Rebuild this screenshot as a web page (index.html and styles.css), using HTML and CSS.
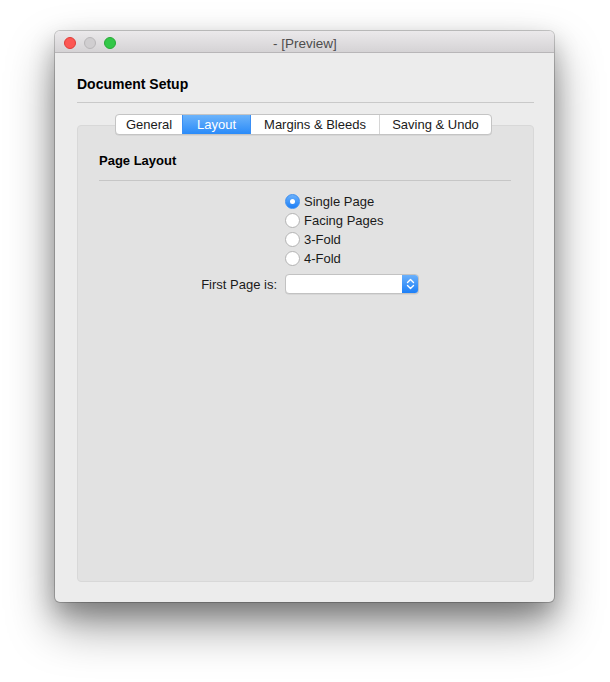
FILE: index.html
```html
<!DOCTYPE html>
<html>
<head>
<meta charset="utf-8">
<link rel="stylesheet" href="styles.css">
</head>
<body>
<div class="window">
  <div class="titlebar">
    <div class="lights">
      <span class="light red"></span>
      <span class="light gray"></span>
      <span class="light green"></span>
    </div>
    <div class="title">- [Preview]</div>
  </div>
  <div class="content">
    <div class="heading">Document Setup</div>
    <div class="sep"></div>
    <div class="tabview">
      <div class="tabs">
        <div class="tab t1">General</div>
        <div class="tab t2 active">Layout</div>
        <div class="tab t3">Margins &amp; Bleeds</div>
        <div class="tab t4">Saving &amp; Undo</div>
      </div>
      <div class="panel">
        <div class="subheading">Page Layout</div>
        <div class="sep2"></div>
        <div class="form">
          <div class="cell"></div>
          <div class="radios">
            <label class="radio"><span class="circle on"></span>Single Page</label>
            <label class="radio"><span class="circle"></span>Facing Pages</label>
            <label class="radio"><span class="circle"></span>3-Fold</label>
            <label class="radio"><span class="circle"></span>4-Fold</label>
          </div>
          <div class="label">First Page is:</div>
          <div class="popup">
            <div class="popup-field"></div>
            <div class="popup-btn">
              <svg width="9" height="12" viewBox="0 0 9 12"><path d="M1.5 4.5 L4.5 1.5 L7.5 4.5 M1.5 7.5 L4.5 10.5 L7.5 7.5" fill="none" stroke="#fff" stroke-width="1.4" stroke-linecap="round" stroke-linejoin="round"/></svg>
            </div>
          </div>
        </div>
      </div>
    </div>
  </div>
</div>
</body>
</html>
```

FILE: styles.css
```css
html, body {
  margin: 0;
  padding: 0;
  background: #ffffff;
}
body {
  font-family: "Liberation Sans", Arial, sans-serif;
  font-size: 13px;
  color: #000;
  padding: 31px 0 0 55px;
  min-height: 682px;
  box-sizing: border-box;
}
.window {
  width: 499px;
  height: 571px;
  box-sizing: border-box;
  background: #ececec;
  border-radius: 5px;
  overflow: hidden;
  box-shadow: 0 0 0 1px rgba(0,0,0,0.2), 0 12px 24px rgba(0,0,0,0.25), 0 24px 48px rgba(0,0,0,0.4);
  display: flex;
  flex-direction: column;
}
.titlebar {
  height: 22px;
  flex: none;
  box-sizing: border-box;
  background: linear-gradient(#ebe9eb, #d5d3d5);
  border-bottom: 1px solid #b8b6b8;
  display: flex;
  align-items: center;
  position: relative;
}
.lights {
  display: flex;
  gap: 8px;
  padding-left: 9px;
  padding-top: 2px;
}
.light {
  width: 12px;
  height: 12px;
  border-radius: 50%;
  box-sizing: border-box;
}
.red { background: #fc5753; border: 0.5px solid #df3d38; }
.gray { background: #d0ced0; border: 0.5px solid #b9b7b9; }
.green { background: #33c748; border: 0.5px solid #27aa35; }
.title {
  position: absolute;
  left: 0;
  right: 0;
  top: 2px;
  line-height: 22px;
  text-align: center;
  color: #4d4d4d;
  font-size: 13.5px;
  padding-left: 1px;
}
.content {
  flex: 1;
  display: flex;
  flex-direction: column;
  padding: 0 20px 20px 22px;
}
.heading {
  font-weight: bold;
  font-size: 14px;
  line-height: 16px;
  margin-top: 23px;
}
.sep {
  height: 1px;
  background: #c9c9c9;
  margin-top: 10px;
}
.tabview {
  flex: 1;
  display: flex;
  flex-direction: column;
  margin-top: 11px;
}
.tabs {
  display: flex;
  align-self: flex-start;
  margin-left: 38px;
  height: 21px;
  box-sizing: border-box;
  background: #fff;
  border: 1px solid #c4c4c4;
  border-radius: 4px;
  position: relative;
  z-index: 1;
  margin-bottom: -10px;
  box-shadow: 0 0.5px 0.5px rgba(0,0,0,0.1);
}
.tab {
  line-height: 19px;
  text-align: center;
  border-left: 1px solid #d6d6d6;
  color: #1a1a1a;
}
.tab.t1 { width: 66px; border-left: none; border-radius: 3px 0 0 3px; }
.tab.t2 { width: 67px; }
.tab.t3 { width: 128px; }
.tab.t4 { width: 111px; border-radius: 0 3px 3px 0; }
.tab.active {
  background: linear-gradient(#6cb3fa, #2a8bf9);
  color: #fff;
  border-left-color: #3a8ff5;
}
.tab.active + .tab { border-left-color: #3a8ff5; }
.panel {
  flex: 1;
  background: #e2e2e2;
  border: 1px solid #d8d8d8;
  border-radius: 4px;
  padding: 0 22px 0 21px;
}
.subheading {
  font-weight: bold;
  line-height: 16px;
  margin-top: 27px;
}
.sep2 {
  height: 1px;
  background: #c6c6c6;
  margin-top: 11px;
}
.form {
  display: grid;
  grid-template-columns: 186px auto;
  align-items: center;
  row-gap: 6px;
  margin-top: 11px;
}
.radios {
  display: flex;
  flex-direction: column;
}
.radio {
  display: flex;
  align-items: center;
  height: 19px;
  gap: 4px;
  color: #1a1a1a;
}
.circle {
  width: 15px;
  height: 15px;
  box-sizing: border-box;
  border-radius: 50%;
  background: #fff;
  border: 1px solid #b3b3b3;
  display: flex;
  align-items: center;
  justify-content: center;
}
.circle.on {
  background: linear-gradient(#6ab0fb, #1c7ff7);
  border-color: #3c8ef0;
}
.circle.on::after {
  content: "";
  width: 5px;
  height: 5px;
  border-radius: 50%;
  background: #fff;
}
.label {
  text-align: right;
  padding-right: 8px;
  color: #1a1a1a;
}
.popup {
  display: flex;
  width: 134px;
  height: 20px;
  box-sizing: border-box;
  border: 1px solid #c2c2c2;
  border-radius: 4px;
  overflow: hidden;
  background: #fff;
  box-shadow: 0 0.5px 0.5px rgba(0,0,0,0.1);
}
.popup-field { flex: 1; }
.popup-btn {
  width: 16px;
  background: linear-gradient(#6ab0fb, #1c7ff7);
  display: flex;
  align-items: center;
  justify-content: center;
}
```
